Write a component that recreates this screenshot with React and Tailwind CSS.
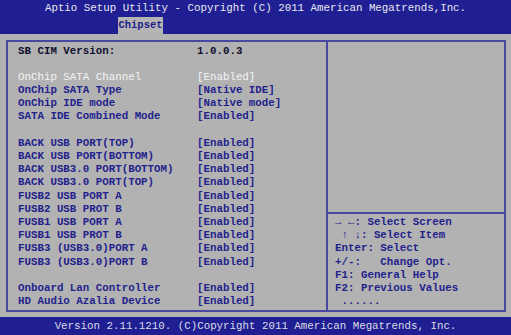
const mono = { fontFamily: '"Liberation Mono", "DejaVu Sans Mono", monospace' };

const rows = [
  { label: 'SB CIM Version:', value: '1.0.0.3', plain: true },
  null,
  { label: 'OnChip SATA Channel', value: '[Enabled]', active: true },
  { label: 'OnChip SATA Type', value: '[Native IDE]' },
  { label: 'OnChip IDE mode', value: '[Native mode]' },
  { label: 'SATA IDE Combined Mode', value: '[Enabled]' },
  null,
  { label: 'BACK USB PORT(TOP)', value: '[Enabled]' },
  { label: 'BACK USB PORT(BOTTOM)', value: '[Enabled]' },
  { label: 'BACK USB3.0 PORT(BOTTOM)', value: '[Enabled]' },
  { label: 'BACK USB3.0 PORT(TOP)', value: '[Enabled]' },
  { label: 'FUSB2 USB PORT A', value: '[Enabled]' },
  { label: 'FUSB2 USB PROT B', value: '[Enabled]' },
  { label: 'FUSB1 USB PORT A', value: '[Enabled]' },
  { label: 'FUSB1 USB PROT B', value: '[Enabled]' },
  { label: 'FUSB3 (USB3.0)PORT A', value: '[Enabled]' },
  { label: 'FUSB3 (USB3.0)PORT B', value: '[Enabled]' },
  null,
  { label: 'Onboard Lan Controller', value: '[Enabled]' },
  { label: 'HD Audio Azalia Device', value: '[Enabled]' },
];

const help = [
  '\u2192 \u2190: Select Screen',
  ' \u2191 \u2193: Select Item',
  'Enter: Select',
  '+/-:   Change Opt.',
  'F1: General Help',
  'F2: Previous Values',
  ' ......',
];

export default function App() {
  return (
    <div className="w-[511px] h-[335px] flex flex-col bg-[#b2b2b2] overflow-hidden" style={mono}>
      <div className="h-[34px] bg-[#1f1f93] flex flex-col">
        <div className="h-[17px] text-center text-[10.8px] leading-[17px] text-[#e8e8f0] whitespace-pre">
          Aptio Setup Utility - Copyright (C) 2011 American Megatrends,Inc.
        </div>
        <div className="h-[17px] pl-[118px] flex">
          <div className="w-[45px] bg-[#b4b4b4] text-[#1f1f8a] font-bold text-[10.5px] leading-[17px] text-center">
            Chipset
          </div>
        </div>
      </div>

      <div className="flex-1 pt-[6px] pl-[6px] pr-[5px] pb-[5px]">
        <div className="h-full flex border-2 border-[#4848a0]">
          <div className="w-[320px] border-r-2 border-[#4848a0] pl-[10px] pt-[2.5px] text-[10.8px] leading-[13.2px] font-bold">
            {rows.map((r, i) =>
              r ? (
                <div key={i} className="flex h-[13.2px] whitespace-pre">
                  <span className={`w-[179px] ${r.active ? 'text-[#f4f4f4] font-normal' : r.plain ? 'text-[#101030]' : 'text-[#22228c]'}`}>
                    {r.label}
                  </span>
                  <span className={r.active ? 'text-[#f4f4f4] font-normal' : r.plain ? 'text-[#101030]' : 'text-[#22228c]'}>
                    {r.value}
                  </span>
                </div>
              ) : (
                <div key={i} className="h-[13.2px]" />
              )
            )}
          </div>
          <div className="flex-1 flex flex-col">
            <div className="h-[172px] border-b-2 border-[#4848a0]" />
            <div className="pl-[7px] pt-[2px] text-[10.8px] leading-[13.2px] font-bold text-[#22228c]">
              {help.map((h, i) => (
                <div key={i} className="h-[13.2px] whitespace-pre">{h}</div>
              ))}
            </div>
          </div>
        </div>
      </div>

      <div className="h-[18px] bg-[#1f1f93] text-center text-[10.8px] leading-[18px] text-[#dcdce4] whitespace-pre">
        Version 2.11.1210. (C)Copyright 2011 American Megatrends, Inc.
      </div>
    </div>
  );
}
